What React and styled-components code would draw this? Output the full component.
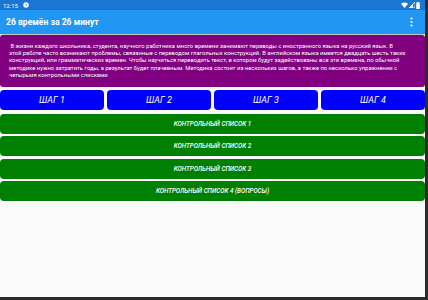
import styled, { createGlobalStyle } from "styled-components"

const Global = createGlobalStyle`
body {
  margin: 0;
  background: #1c1c1c;
  font-family: Roboto, "Noto Sans", sans-serif;
}
`

const Frame = styled.div`
width: 425px;
height: 297px;
border-right: 3px solid #2b2b2b;
border-bottom: 3px solid #2b2b2b;
background-color: #fafafa;
display: flex;
flex-direction: column;
overflow: hidden;
`

const StatusBar = styled.div`
height: 10px;
background-color: #1976d2;
display: flex;
align-items: center;
justify-content: space-between;
padding: 0 5px 0 3px;
color: white;
font-size: 6px;
`

const StatusLeft = styled.div`
display: flex;
align-items: center;
gap: 5px;
`

const StatusRight = styled.div`
display: flex;
align-items: center;
gap: 1px;
`

const AppBar = styled.div`
height: 24px;
background-color: #2196f3;
display: flex;
align-items: center;
justify-content: space-between;
padding: 0 12px 0 6px;
box-shadow: 0 1px 2px rgba(0,0,0,0.3);
z-index: 1;
`

const Title = styled.div`
color: white;
font-weight: bold;
font-size: 8.6px;
`

const Content = styled.div`
display: flex;
flex-direction: column;
padding-top: 1px;
`

const Intro = styled.div`
height: 52px;
box-sizing: border-box;
background-color: #800080;
border-radius: 3px;
color: white;
font-size: 5.85px;
line-height: 7.2px;
padding: 8px 4px 0 9px;
white-space: pre;
overflow: hidden;
`

const Steps = styled.div`
display: flex;
gap: 3px;
margin-top: 3px;
`

const StepButton = styled.div`
flex: 1;
height: 20px;
background-color: #0000ff;
border-radius: 4px;
color: white;
font-style: italic;
font-size: 9px;
display: flex;
align-items: center;
justify-content: center;
`

const Lists = styled.div`
display: flex;
flex-direction: column;
gap: 2.4px;
margin-top: 4px;
`

const ListButton = styled.div`
height: 20px;
background-color: #008000;
border-radius: 4px;
color: white;
font-style: italic;
font-weight: 500;
font-size: 6.3px;
display: flex;
align-items: center;
justify-content: center;
`

const introLines = [
  " В жизни каждого школьника, студента, научного работника много времени занимают переводы с иностранного языка на русский язык. В",
  "этой работе часто возникают проблемы, связанные с переводом глагольных конструкций. В английском языка имеется двадцать шесть таких",
  "конструкций, или грамматических времен. Чтобы научиться переводить текст, в котором будут задействованы все эти времена, по обычной",
  "методике нужно затратить годы, а результат будет плачевным. Методика состоит из нескольких шагов, а также по несколько упражнении с",
  "четырьмя контрольными списками",
]

const lists = [
  "КОНТРОЛЬНЫЙ СПИСОК 1",
  "КОНТРОЛЬНЫЙ СПИСОК 2",
  "КОНТРОЛЬНЫЙ СПИСОК 3",
  "КОНТРОЛЬНЫЙ СПИСОК 4 (ВОПРОСЫ)",
]

const App = () => {
  return (
    <>
      <Global />
      <Frame>
        <StatusBar>
          <StatusLeft>
            <span>12:15</span>
            <svg width="6" height="6" viewBox="0 0 12 12">
              <circle cx="6" cy="6" r="5.5" fill="white" />
              <path d="M6 3v3l2 1.5" stroke="#1976d2" strokeWidth="1.5" fill="none" />
            </svg>
          </StatusLeft>
          <StatusRight>
            <svg width="7" height="6" viewBox="0 0 14 12">
              <path d="M0 3.5C4 0 10 0 14 3.5L7 12Z" fill="white" />
            </svg>
            <svg width="6" height="6" viewBox="0 0 12 12">
              <path d="M12 0V12H0Z" fill="none" stroke="white" strokeWidth="1.5" />
              <path d="M8 4V12H0Z" fill="white" />
            </svg>
            <svg width="4" height="7" viewBox="0 0 6 12">
              <rect x="0" y="1" width="6" height="11" rx="0.5" fill="white" />
              <rect x="1.5" y="0" width="3" height="1.5" fill="white" />
            </svg>
          </StatusRight>
        </StatusBar>
        <AppBar>
          <Title>26 времён за 26 минут</Title>
          <svg width="3" height="10" viewBox="0 0 3 10">
            <circle cx="1.5" cy="1.5" r="1.1" fill="white" />
            <circle cx="1.5" cy="5" r="1.1" fill="white" />
            <circle cx="1.5" cy="8.5" r="1.1" fill="white" />
          </svg>
        </AppBar>
        <Content>
          <Intro>{introLines.join("\n")}</Intro>
          <Steps>
            {[1, 2, 3, 4].map(n => (
              <StepButton key={n}>ШАГ {n}</StepButton>
            ))}
          </Steps>
          <Lists>
            {lists.map(l => (
              <ListButton key={l}>{l}</ListButton>
            ))}
          </Lists>
        </Content>
      </Frame>
    </>
  )
}

export default App
